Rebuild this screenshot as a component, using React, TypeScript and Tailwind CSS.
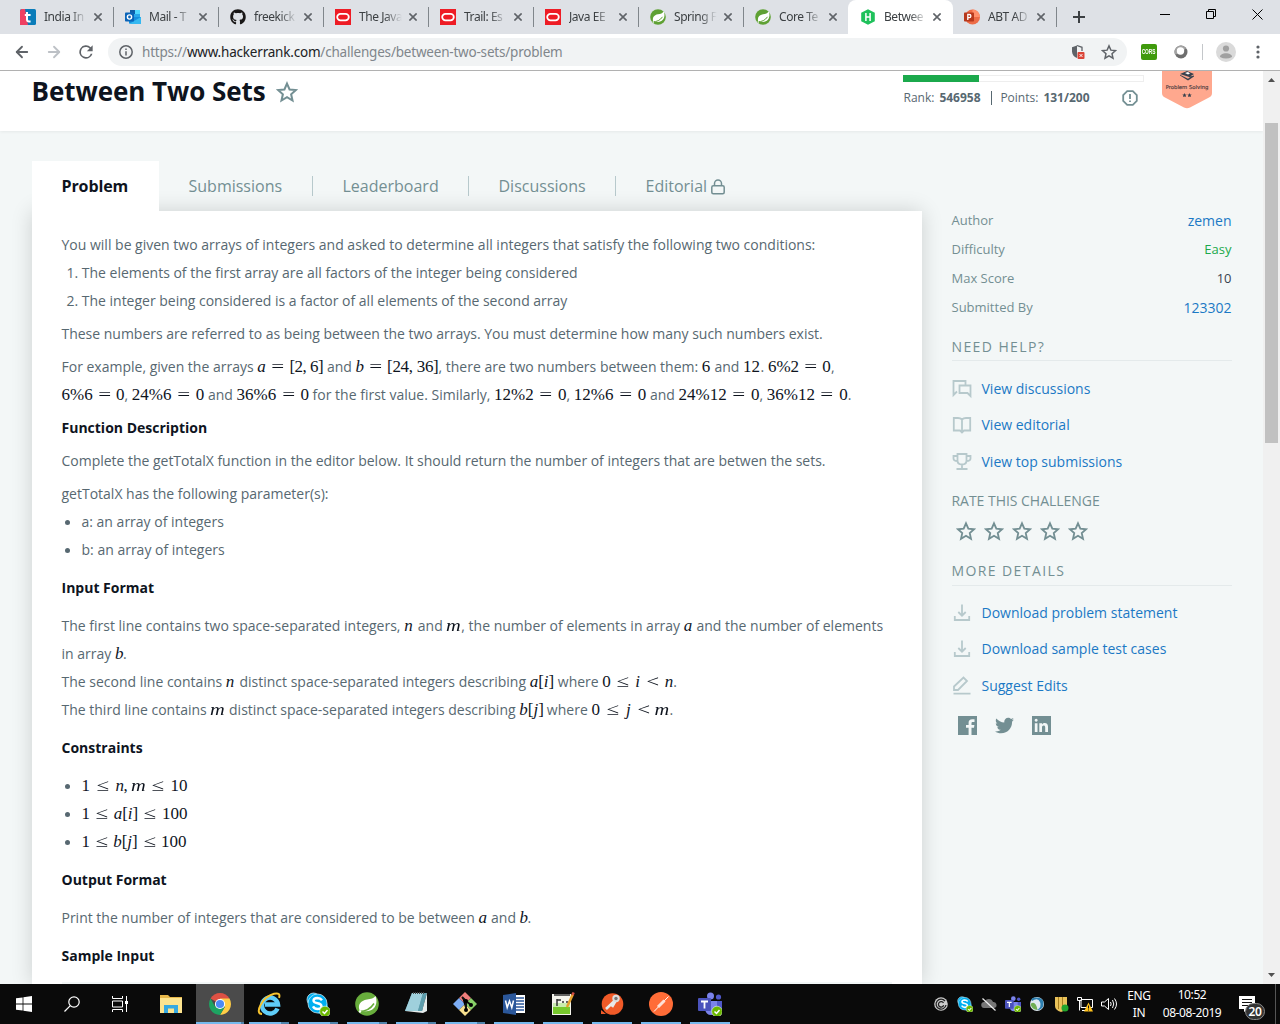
import type { ReactNode } from 'react';
import { FaTwitter, FaGithub } from 'react-icons/fa';
import { ArrowLeft, ArrowRight } from 'lucide-react';

const STAR = 'M12 2.8l2.8 6.4 6.9.7-5.2 4.6 1.5 6.8-6-3.6-6 3.6 1.5-6.8-5.2-4.6 6.9-.7z';

function Star({ className }: { className: string }) {
  return (
    <svg viewBox="0 0 24 24" className={className} fill="none" stroke="currentColor" strokeWidth="2.2">
      <path d={STAR} />
    </svg>
  );
}

/* ---------- browser chrome ---------- */

function Oracle() {
  return (
    <svg viewBox="0 0 16 16" className="size-4 shrink-0">
      <path fill="#ee1c25" d="M0 0h16v16H0z" />
      <rect x="2.2" y="4.8" width="11.6" height="6.6" rx="3.3" fill="none" stroke="#fff" strokeWidth="1.8" />
    </svg>
  );
}

function Spring() {
  return (
    <svg viewBox="0 0 16 16" className="size-4 shrink-0">
      <circle cx="8" cy="8" r="7.8" fill="#5fa134" />
      <path fill="#fff" d="M13.800 2.200c1.400 3.800.7 8-2.500 9.800-2.300 1.300-5.200.9-8 .6C2 9 3.800 6 8 5.300c2.600-.4 4.600-1 5.800-3.100z" />
      <path d="M2.500 12.800q6.500.2 10-5" fill="none" stroke="#5fa134" strokeWidth="1" />
      <circle cx="3.300" cy="13" r=".8" fill="#fff" />
    </svg>
  );
}

function TIcon() {
  return (
    <svg viewBox="0 0 16 16" className="size-4 shrink-0">
      <rect width="16" height="16" rx="1.5" fill="#0a7cb9" />
      <path fill="#ef4163" d="M1.5 0H5l3 16H0V1.5z" />
      <path d="M7 3v7.5q0 2 2 2h1.6M4.8 6h5.8" fill="none" stroke="#fff" strokeWidth="2" />
    </svg>
  );
}

function Outlook() {
  return (
    <svg viewBox="0 0 16 16" className="size-4 shrink-0">
      <path fill="#28a8ea" d="M5 1h10v8H5z" />
      <path fill="#50d9ff" d="M10 1h5v4h-5z" />
      <path fill="#0f5ea8" d="M5 1h5v4H5z" />
      <path fill="#1490df" d="M4 8l12 0v6.5H4z" />
      <path fill="#35b8f1" d="M4 15l12-7v7z" />
      <rect y="3.5" width="9" height="9" rx=".8" fill="#0a64b8" />
      <circle cx="4.500" cy="8" r="2.100" fill="none" stroke="#fff" strokeWidth="1.400" />
    </svg>
  );
}

function Hacker() {
  return (
    <svg viewBox="0 0 16 16" className="size-4 shrink-0">
      <path fill="#1fc15b" d="M8 .2l6.800 3.600v8.400L8 15.800 1.200 12.200V3.800z" />
      <path d="M5.900 4v8M10.100 4v8M5.900 8h4.200" stroke="#fff" strokeWidth="1.500" />
    </svg>
  );
}

function PowerPoint() {
  return (
    <svg viewBox="0 0 16 16" className="size-4 shrink-0">
      <circle cx="8.500" cy="8" r="7.500" fill="#ed6c47" />
      <path fill="#ff8f6b" d="M8.500.5A7.500 7.500 0 0 1 16 8H8.500z" />
      <rect y="3.500" width="10" height="9" rx=".8" fill="#b7381c" />
      <path d="M3.800 11V5.500h1.500a1.600 1.600 0 0 1 0 3.200H3.800" fill="none" stroke="#fff" strokeWidth="1.300" />
    </svg>
  );
}

function Close() {
  return (
    <svg viewBox="0 0 8 8" className="size-2 shrink-0" stroke="#5f6368" strokeWidth="1.600">
      <path d="M.4.4l7.200 7.200M7.600.4L.4 7.600" />
    </svg>
  );
}

function Tab({ icon, title, active, last }: { icon: ReactNode; title: string; active?: boolean; last?: boolean }) {
  return (
    <div
      className={
        active
          ? 'flex h-[34px] w-[105px] items-center rounded-t-lg bg-white pl-3 pr-3'
          : last
            ? 'flex h-[34px] w-[103px] items-center pl-[11px] pr-[11px]'
            : 'flex h-[34px] w-[105px] items-center pl-3 pr-[11px]'
      }
    >
      {icon}
      <span className="ml-2 h-[18px] w-[43px] whitespace-nowrap font-['Noto_Sans'] text-[12px] leading-[18px] tracking-[-0.45px] text-[#3c4043] [mask-image:linear-gradient(to_right,#000_60%,transparent)]">
        {title}
      </span>
      <span className="ml-auto flex">
        <Close />
      </span>
    </div>
  );
}

function Sep() {
  return <div className="-mr-px h-5 w-px shrink-0 self-center bg-[#80868b]" />;
}

function TabStrip() {
  return (
    <div className="flex h-[34px] bg-[#dee1e6] pl-2">
      <Tab icon={<TIcon />} title="India In" />
      <Sep />
      <Tab icon={<Outlook />} title="Mail - T" />
      <Sep />
      <Tab icon={<FaGithub className="size-4 shrink-0 text-[#191717]" />} title="freekick" />
      <Sep />
      <Tab icon={<Oracle />} title="The Java" />
      <Sep />
      <Tab icon={<Oracle />} title="Trail: Es" />
      <Sep />
      <Tab icon={<Oracle />} title="Java EE" />
      <Sep />
      <Tab icon={<Spring />} title="Spring F" />
      <Sep />
      <Tab icon={<Spring />} title="Core Te" />
      <Tab icon={<Hacker />} title="Betwee" active />
      <Tab icon={<PowerPoint />} title="ABT AD" last />
      <Sep />
      <svg viewBox="0 0 12 12" className="ml-[17px] mt-[11px] size-3" stroke="#3c4043" strokeWidth="2">
        <path d="M6 0v12M0 6h12" />
      </svg>
      <svg viewBox="0 0 110 12" className="ml-auto mr-[17px] mt-[8px] h-3 w-[110px]" fill="none" stroke="#000" strokeWidth="1">
        <path d="M7 6.500h10M53.500 3.500h7v7h-7zM55.500 3.500v-2h7v7h-2M99.500 1.500l10 10M109.500 1.500l-10 10" />
      </svg>
    </div>
  );
}

function Toolbar() {
  return (
    <div className="flex h-[37px] items-center border-b border-[#b1b1b1] bg-white pl-[13px]">
      <ArrowLeft className="size-[18px] text-[#5f6368]" strokeWidth={2.4} />
      <ArrowRight className="ml-[14px] size-[18px] text-[#bdc1c6]" strokeWidth={2.4} />
      <svg viewBox="0 0 24 24" className="ml-[13px] size-5" fill="#5f6368">
        <path d="M17.650 6.350A8 8 0 1 0 19.730 14h-2.080A6 6 0 1 1 12 6c1.660 0 3.140.69 4.220 1.780L13 11h7V4z" />
      </svg>
      <div className="ml-[12px] flex h-7 w-[1019px] items-center rounded-full bg-[#f1f3f4] pl-[11px] pr-[10px]">
        <svg viewBox="0 0 14 14" className="size-[14px]" fill="none" stroke="#5f6368" strokeWidth="1.500">
          <circle cx="7" cy="7" r="6.200" />
          <path d="M7 6.200v4.200M7 3.500v1.500" />
        </svg>
        <span className="ml-[9px] whitespace-nowrap font-['Noto_Sans'] text-[13.500px] tracking-[-0.200px] text-[#80868b]">
          https://<span className="text-[#202124]">www.hackerrank.com</span>/challenges/between-two-sets/problem
        </span>
        <svg viewBox="0 0 14 16" className="ml-auto h-4 w-[14px]">
          <path d="M6 1.500L1 3.300v4C1 10.500 3 13 6 14z" fill="#5f6368" />
          <path d="M6 1.500l5 1.800V7" fill="none" stroke="#5f6368" strokeWidth="1.300" />
          <rect x="6.500" y="8" width="7" height="7" rx="1" fill="#db4437" />
          <path d="M8.600 10.100l2.800 2.800M11.400 10.100l-2.800 2.800" stroke="#fff" />
        </svg>
        <Star className="ml-[16px] size-4 text-[#5f6368]" />
      </div>
      <span className="ml-[14px] flex size-4 items-center justify-center rounded-[2px] bg-[#3f9a0c] font-['Liberation_Sans'] text-[8px] font-bold text-white">
        <span className="shrink-0 scale-x-[0.6]">CORS</span>
      </span>
      <svg viewBox="0 0 16 16" className="ml-4 size-4">
        <circle cx="8" cy="8" r="6.500" fill="#6e6e6e" />
        <path d="M8 1.500a6.500 6.500 0 0 0-6 9Q8 10 13 4.200A6.500 6.500 0 0 0 8 1.500z" fill="#a3a3a3" />
        <circle cx="7.500" cy="7" r="3.700" fill="#fff" />
      </svg>
      <div className="ml-[13px] h-4 w-px bg-[#c4c7ca]" />
      <svg viewBox="0 0 20 20" className="ml-[13px] size-5">
        <circle cx="10" cy="10" r="10" fill="#dadada" />
        <circle cx="10" cy="6.500" r="3.100" fill="#a0a0a0" />
        <path d="M4 15c0-5 12-5 12 0q-6 3-12 0z" fill="#a0a0a0" />
      </svg>
      <svg viewBox="0 0 4 14" className="ml-[20px] h-[14px] w-1" fill="#5f6368">
        <circle cx="2" cy="2" r="1.600" />
        <circle cx="2" cy="7" r="1.600" />
        <circle cx="2" cy="12" r="1.600" />
      </svg>
    </div>
  );
}

/* ---------- page ---------- */

function PageHeader() {
  return (
    <div className="flex h-[60px] shrink-0 bg-white pl-[31.5px] shadow-[0_1px_3px_rgba(0,0,0,0.06)]">
      <h1 className="mt-[2px] w-[234px] whitespace-nowrap text-[26px] font-bold leading-9 tracking-[-0.05px] text-[#0e141e]">Between Two Sets</h1>
      <Star className="ml-[10.5px] mt-[10px] size-[22px] text-[#738f93]" />
      <div className="ml-auto mr-[18px] w-[241px]">
        <div className="mt-1 h-[7px] border border-[#eeeeee] bg-white">
          <div className="-ml-px -mt-px h-[7px] w-[76px] bg-[#1ba94c]" />
        </div>
        <div className="mt-1 flex h-6 items-center pl-[0.5px] text-[12px] text-[#576871]">
          Rank:<b className="ml-[5px] w-[42px] font-bold">546958</b>
          <span className="ml-[9.5px] mr-[8.5px] h-[14px] w-px bg-[#576871]" />
          Points:<b className="ml-[5px] font-bold">131/200</b>
          <svg viewBox="0 0 16 16" className="ml-auto mr-[6px] size-4" fill="none" stroke="#738f93" strokeWidth="1.800">
            <path d="M5.200 1.200h5.600l4 4v5.600l-4 4H5.200l-4-4V5.200zM8 4v5M8 10.500V12" />
          </svg>
        </div>
      </div>
      <div className="mr-[51px] h-[38px] w-[50px]">
        <svg viewBox="0 0 50 38" className="h-[38px] w-[50px]">
          <path fill="#ffa88e" d="M0 0h50v22q0 3-3 4.500L28 36.500q-3 1.500-6 0L3 26.500q-3-1.500-3-4.500z" />
          <path fill="#39424e" d="M18 3l7-3 7 3-4 2.500 4-1v1l-6 4-8-5v-.800l8 4 2-1.500z" />
          <path fill="#fff" d="M23 2l3-1 2 1.500-2 1z" />
          <text x="25" y="18.200" textAnchor="middle" className="font-['DejaVu_Sans'] text-[5.300px]" fill="#4a3c40" stroke="#4a3c40" strokeWidth=".15">Problem Solving</text>
          <path fill="#39424e" d="M22.500 22l.7 1.400 1.500.2-1.100 1 .3 1.500-1.400-.7-1.400.7.300-1.500-1.100-1 1.500-.2zM27.500 22l.7 1.400 1.500.2-1.100 1 .3 1.500-1.400-.7-1.400.7.300-1.500-1.100-1 1.500-.2z" />
        </svg>
      </div>
    </div>
  );
}

function PageTabs() {
  return (
    <div className="flex h-[50px] items-center text-[16px] text-[#738f93]">
      <div className="flex h-full w-[127px] items-center bg-white pl-[29.5px] font-bold tracking-[-0.1px] text-[#0e141e]">Problem</div>
      <div className="w-[153px] pl-[29.5px]">Submissions</div>
      <div className="h-5 w-px bg-[#b7c9cc]" />
      <div className="w-[155px] pl-[29.5px]">Leaderboard</div>
      <div className="h-5 w-px bg-[#b7c9cc]" />
      <div className="w-[146px] pl-[29.5px]">Discussions</div>
      <div className="h-5 w-px bg-[#b7c9cc]" />
      <div className="flex items-center pl-[29.5px]">
        Editorial
        <svg viewBox="0 0 14 16" className="ml-[4px] mt-[2px] h-4 w-[14px]" fill="none" stroke="#738f93" strokeWidth="1.500">
          <rect x=".8" y="6.800" width="12.400" height="8" rx="1.500" />
          <path d="M3.500 6.800V4.500a3.500 3.500 0 0 1 7 0v2.300" />
        </svg>
      </div>
    </div>
  );
}

function M({ w, children }: { w: string; children: ReactNode }) {
  return (
    <span className={`inline-flex justify-between whitespace-pre font-['Liberation_Serif'] text-[17px] leading-[20px] text-[#0e141e] ${w}`}>
      {children}
    </span>
  );
}

/* relation sign, drawn wider than the serif face has it */
function Op({ children }: { children: ReactNode }) {
  return <span className="inline-block scale-x-[1.35]">{children}</span>;
}

function Line({ children }: { children: ReactNode }) {
  return <p className="h-7 whitespace-nowrap leading-7">{children}</p>;
}

function Title({ children }: { children: ReactNode }) {
  return <h2 className="h-7 font-bold leading-7 text-[#0e141e]">{children}</h2>;
}

function Bullet({ children }: { children: ReactNode }) {
  return (
    <li className="flex h-7 items-center leading-7">
      <span className="ml-[3px] mr-[12px] size-[5px] rounded-full bg-[#576871]" />
      <span>{children}</span>
    </li>
  );
}

function Problem() {
  return (
    <div className="h-[773px] bg-white pl-[29.5px] pr-[30px] pt-5 text-[14px] text-[#576871]">
      <Line>You will be given two arrays of integers and asked to determine all integers that satisfy the following two conditions:</Line>
      <ol className="tracking-[-0.01px]">
        <li className="h-7 pl-[5px] leading-7">1. The elements of the first array are all factors of the integer being considered</li>
        <li className="h-7 pl-[5px] leading-7">2. The integer being considered is a factor of all elements of the second array</li>
      </ol>
      <div className="mt-[5px] tracking-[-0.015px]">
        <Line>These numbers are referred to as being between the two arrays. You must determine how many such numbers exist.</Line>
      </div>
      <div className="mt-[5px]">
        <Line>
          For example, given the arrays <M w="w-[66px]"><i>a</i><Op>=</Op><span className="tracking-[-0.5px]">[2, 6]</span></M> and <M w="w-[83px]"><i>b</i><Op>=</Op><span className="tracking-[-0.3px]">[24, 36]</span></M>, there are two numbers between them: <M w="w-[9px]">6</M> and <M w="w-[17.5px]">12</M>. <M w="w-[63px]"><span>6%2</span><Op>=</Op><span>0</span></M>,
        </Line>
        <Line>
          <M w="w-[63px]"><span>6%6</span><Op>=</Op><span>0</span></M>, <M w="w-[72.5px]"><span>24%6</span><Op>=</Op><span>0</span></M> and <M w="w-[72.5px]"><span>36%6</span><Op>=</Op><span>0</span></M> for the first value. Similarly, <M w="w-[72.5px]"><span>12%2</span><Op>=</Op><span>0</span></M>, <M w="w-[72.5px]"><span>12%6</span><Op>=</Op><span>0</span></M> and <M w="w-[81px]"><span>24%12</span><Op>=</Op><span>0</span></M>, <M w="w-[81px]"><span>36%12</span><Op>=</Op><span>0</span></M>.
        </Line>
      </div>
      <div className="mt-[5px]">
        <Title>Function Description</Title>
      </div>
      <div className="mt-[5px] tracking-[-0.02px]">
        <Line>Complete the getTotalX function in the editor below. It should return the number of integers that are betwen the sets.</Line>
      </div>
      <div className="mt-[5px]">
        <Line>getTotalX has the following parameter(s):</Line>
        <ul>
          <Bullet>a: an array of integers</Bullet>
          <Bullet>b: an array of integers</Bullet>
        </ul>
      </div>
      <div className="mt-[10px] space-y-[10px]">
        <Title>Input Format</Title>
        <div>
          <Line>The first line contains two space-separated integers, <M w="w-[10px]"><i>n</i></M> and <M w="w-[15px]"><i className="origin-left scale-x-[1.2]">m</i></M>, the number of elements in array <M w="w-[9px]"><i>a</i></M> and the number of elements</Line>
          <Line>in array <M w="w-[8px]"><i>b</i></M>.</Line>
          <Line>The second line contains <M w="w-[10px]"><i>n</i></M> distinct space-separated integers describing <M w="w-[24.5px]"><i>a</i><span>[</span><i>i</i><span>]</span></M> where <M w="w-[71px]"><span>0</span><Op>≤</Op><i>i</i><Op>&lt;</Op><i>n</i></M>.</Line>
          <Line>The third line contains <M w="w-[15px]"><i className="origin-left scale-x-[1.2]">m</i></M> distinct space-separated integers describing <M w="w-[24px]"><i>b</i><span>[</span><i>j</i><span>]</span></M> where <M w="w-[78px]"><span>0</span><Op>≤</Op><i>j</i><Op>&lt;</Op><i className="origin-right scale-x-[1.2]">m</i></M>.</Line>
        </div>
        <Title>Constraints</Title>
        <ul>
          <Bullet><M w="w-[106px]"><span>1</span><Op>≤</Op><span className="tracking-[-0.5px]"><i>n</i>, <i className="inline-block origin-left scale-x-[1.2] pr-[2px]">m</i></span><Op>≤</Op><span>10</span></M></Bullet>
          <Bullet><M w="w-[106px]"><span>1</span><Op>≤</Op><span><i>a</i>[<i>i</i>]</span><Op>≤</Op><span>100</span></M></Bullet>
          <Bullet><M w="w-[105px]"><span>1</span><Op>≤</Op><span><i>b</i>[<i>j</i>]</span><Op>≤</Op><span>100</span></M></Bullet>
        </ul>
        <Title>Output Format</Title>
        <div className="tracking-[-0.01px]">
          <Line>Print the number of integers that are considered to be between <M w="w-[9px]"><i>a</i></M> and <M w="w-[8px]"><i>b</i></M>.</Line>
        </div>
        <Title>Sample Input</Title>
      </div>
      <div className="mt-3 h-[2px] bg-[#f3f7f7]" />
    </div>
  );
}

function Row({ label, value, color }: { label: string; value: string; color: string }) {
  return (
    <div className="flex h-[29px] items-center justify-between text-[13px]">
      <span className="text-[#738f93]">{label}</span>
      <span className={color}>{value}</span>
    </div>
  );
}

function Action({ d, text, h }: { d: string; text: string; h: string }) {
  return (
    <div className={`flex items-center text-[14px] text-[#1b79c5] ${h}`}>
      <svg viewBox="0 0 20 20" className="mt-px size-5 text-[#b7c9cc]" fill="none" stroke="currentColor" strokeWidth="1.800">
        <path d={d} />
      </svg>
      <span className="ml-[10px]">{text}</span>
    </div>
  );
}

const DOWNLOAD = 'M10 1.500v11M6.300 9l3.700 3.700L13.700 9M2.800 13v4h14.400v-4';

function Sidebar() {
  return (
    <aside className="ml-[29.5px] mt-[45px] w-[280px]">
      <Row label="Author" value="zemen" color="text-[14px] text-[#1b79c5]" />
      <Row label="Difficulty" value="Easy" color="text-[#1ba94c]" />
      <Row label="Max Score" value="10" color="text-[#39424e]" />
      <Row label="Submitted By" value="123302" color="text-[14px] text-[#1b79c5]" />
      <div className="mt-[15px] h-[24px] border-b border-[#e4eaeb] text-[14px] leading-[20px] tracking-[1.400px] text-[#738f93]">NEED HELP?</div>
      <div className="mt-[9px]">
        <Action h="h-9" text="View discussions" d="M5 12.500L1.500 16V2h12v4M7.500 6.500h11V17L15.500 14h-8z" />
        <Action h="h-9" text="View editorial" d="M10 4.500Q8.500 3 6 3H1.800v12.500H8l2 2 2-2h6.200V3H14q-2.500 0-4 1.500zV16" />
        <Action h="h-[38px]" text="View top submissions" d="M5.500 2h9v6.500q0 4-4.500 4t-4.500-4zM5.500 4h-4v2.500Q1.500 9 5.500 9M14.500 4h4v2.500Q18.500 9 14.500 9M10 12.500V17M4.500 17h11" />
      </div>
      <div className="mt-[11px] text-[14px] leading-5 tracking-[-0.030px] text-[#738f93]">RATE THIS CHALLENGE</div>
      <div className="mt-[10px] flex h-[21px] gap-[8px] pl-[4px] text-[#738f93]">
        {[1, 2, 3, 4, 5].map((n) => (
          <Star key={n} className="size-5" />
        ))}
      </div>
      <div className="mt-[19px] h-[25px] border-b border-[#e4eaeb] text-[14px] leading-[20px] tracking-[1.400px] text-[#738f93]">MORE DETAILS</div>
      <div className="mt-[8px]">
        <Action h="h-9" text="Download problem statement" d={DOWNLOAD} />
        <Action h="h-9" text="Download sample test cases" d={DOWNLOAD} />
        <Action h="h-[39px]" text="Suggest Edits" d="M2 14v-3.500L11.500 1.500l3.500 3.500L6 14zM1.500 17.700h17" />
      </div>
      <div className="mt-[11px] flex items-center gap-[18px] pl-[6px] text-[#738f93]">
        <svg viewBox="0 0 19 19" className="size-[19px]" fill="currentColor">
          <path d="M0 0h19v19h-5.500v-7.200H16l.4-2.900h-2.900V7.200c0-.9.300-1.300 1.400-1.300h1.600V3.200h-2.300c-2.400 0-3.600 1.300-3.600 3.600v2.100H8v2.900h2.600V19H0z" />
        </svg>
        <FaTwitter className="size-[19px]" />
        <svg viewBox="0 0 19 19" className="size-[19px]" fill="currentColor">
          <path fillRule="evenodd" d="M0 0h19v19H0zM2.800 7.200v8.800h2.700V7.200zM4.150 2.800a1.500 1.500 0 1 0 .01 0zM7.300 7.200v8.800H10v-4.500c0-2.600 3.200-2.700 3.200 0V16H16v-5.400c0-4-4.200-4.400-6-2.200V7.200z" />
        </svg>
      </div>
    </aside>
  );
}

function Scrollbar() {
  return (
    <div className="flex w-[17px] shrink-0 flex-col items-center bg-[#f0f0f0]">
      <svg viewBox="0 0 7 4" className="mt-[7px] h-1 w-[7px]" fill="#505050"><path d="M3.500 0L7 4H0z" /></svg>
      <div className="mt-[41px] h-[320px] w-[13px] bg-[#c1c1c1]" />
      <svg viewBox="0 0 7 4" className="mb-[7px] mt-auto h-1 w-[7px]" fill="#505050"><path d="M3.500 4L7 0H0z" /></svg>
    </div>
  );
}

/* ---------- taskbar ---------- */

function TaskButton({ children, active, stacked, open = true }: { children: ReactNode; active?: boolean; stacked?: boolean; open?: boolean }) {
  return (
    <div className={active ? 'ml-px flex h-10 w-12 flex-col items-center bg-[#4b4b4b]' : 'ml-px flex h-10 w-12 flex-col items-center'}>
      <svg viewBox="0 0 24 24" className="mt-2 size-6">{children}</svg>
      {open && (
        <div className={active ? 'mt-auto flex h-[2px] w-12 justify-end bg-[#76b9ed]' : 'mt-auto flex h-[2px] w-10 justify-end bg-[#76b9ed]'}>
          {stacked && <div className={active ? 'w-[3px] bg-[#4f83ab]' : 'w-2 bg-[#4f83ab]'} />}
        </div>
      )}
    </div>
  );
}

const CHECK = (
  <g>
    <circle cx="19" cy="19.500" r="5.300" fill="#6bb700" stroke="#e8f4d8" strokeWidth=".6" />
    <path d="M16.500 19.500l2 2 3-3.500" fill="none" stroke="#fff" strokeWidth="1.500" />
  </g>
);

const TEAMS = (
  <g>
    <circle cx="12.500" cy="4" r="3.500" fill="#7b83eb" />
    <circle cx="20.500" cy="5" r="2.600" fill="#5059c9" />
    <path fill="#5059c9" d="M15 9h9v7q-1 5-5 5z" />
    <path fill="#7b83eb" d="M7 9h12v8q-1 6-6 6t-6-6z" />
    <rect y="6" width="13" height="13" rx="1" fill="#4b53bc" />
    <path d="M3 9.500h7M6.500 9.500v7" stroke="#fff" strokeWidth="1.800" />
    {CHECK}
  </g>
);

const SKYPE = (
  <g>
    <circle cx="7.500" cy="7.500" r="6.500" fill="#00aff0" stroke="#d9f3fd" strokeWidth=".7" />
    <circle cx="15" cy="15" r="7" fill="#00aff0" />
    <circle cx="11.500" cy="11.500" r="9.500" fill="#00aff0" stroke="#d9f3fd" strokeWidth=".7" />
    <path d="M16 8.200Q14.500 6 11.500 6 7.500 6.200 7.500 8.600q0 2 4 2.700t4 3q0 2.700-4 2.700-3 0-4.500-2.600" fill="none" stroke="#fff" strokeWidth="2.400" />
    {CHECK}
  </g>
);

function Tray({ children }: { children: ReactNode }) {
  return <svg viewBox="0 0 16 16" className="size-4 shrink-0">{children}</svg>;
}

function Taskbar() {
  return (
    <div className="flex h-10 bg-[#0a0a0a] text-white">
      <div className="flex w-12 items-center justify-center">
        <svg viewBox="0 0 16 16" className="size-4" fill="#fff"><path d="M0 2.300L6.600 1.400v6.200H0zM7.400 1.300L16 0v7.600H7.400zM0 8.400h6.600v6.200L0 13.700zM7.400 8.400H16V16l-8.600-1.200z" /></svg>
      </div>
      <div className="flex w-12 items-center justify-center">
        <svg viewBox="0 0 16 16" className="size-4" fill="none" stroke="#fff" strokeWidth="1.200"><circle cx="10" cy="6" r="5.200" /><path d="M6.300 9.700L.5 15.500" /></svg>
      </div>
      <div className="flex w-12 items-center justify-center">
        <svg viewBox="0 0 16 16" className="size-4" fill="none" stroke="#fff"><path d="M.5 0v2.500h10V0M.5 5h10v6H.500zM.5 16v-2.500h10V16M14.500 0v16" /><path d="M13 5h3v3h-3z" fill="#fff" stroke="none" /></svg>
      </div>
      <div className="ml-[2px] flex">
        <TaskButton open={false}>
          <path fill="#e8b84a" d="M1 3h8l2 2h12v16H1z" />
          <path fill="#fde48f" d="M1 6h22v15H1z" />
          <path fill="#36a9e1" d="M5 13h14v8h-4v-4.500H9V21H5z" />
        </TaskButton>
        <TaskButton active stacked>
          <path fill="#dd5144" d="M12 12L2.500 6.500a11 11 0 0 1 19 0z" />
          <path fill="#ffcd46" d="M12 12V6.500h9.500A11 11 0 0 1 12 23l4.800-8z" />
          <path fill="#1da462" d="M12 12l4.800 2.700L12 23A11 11 0 0 1 2.500 6.500l4.700 8.200z" />
          <circle cx="12" cy="12" r="5.100" fill="#fff" />
          <circle cx="12" cy="12" r="4.100" fill="#4c8bf5" />
        </TaskButton>
        <TaskButton stacked>
          <path d="M20.500 16.500A8 8 0 1 1 21 12.500H8" fill="none" stroke="#5fcdf8" strokeWidth="4.400" />
          <path d="M5 22C-3 22 5 5 17 1.800q7-1.500 5 4" fill="none" stroke="#f7c32e" strokeWidth="2" />
        </TaskButton>
        <TaskButton stacked>{SKYPE}</TaskButton>
        <TaskButton stacked>
          <circle cx="12" cy="12" r="11.800" fill="#68ad3c" />
          <path fill="#fff" d="M20.500 4c2 5.400 1 11-3.500 13.700-3.500 2-8 1.500-12 1.500C2 13 5.500 8.500 12 7.500c4-.6 6.700-1 8.500-3.500z" />
          <path d="M4 19.500q10 0 15-8" fill="none" stroke="#68ad3c" strokeWidth="1.500" />
          <circle cx="5" cy="19.500" r="1.200" fill="#fff" />
        </TaskButton>
        <TaskButton stacked>
          <path fill="#5d9dac" d="M8 1h15l-5 18H1z" />
          <path fill="#9fd0dc" d="M8 1h11l-5 18H1z" />
          <path fill="#e5ecec" d="M1 19h17l5-18v18l-4 2z" />
          <path fill="#5d9dac" d="M14 19l5-18h3l-4 18z" />
          <path d="M9 1h12" stroke="#444" strokeDasharray="1 1" strokeWidth="2" />
        </TaskButton>
        <TaskButton stacked>
          <path fill="#f07d7b" d="M12 0l6 6-6 6-6-6z" />
          <path fill="#7cadf5" d="M6 6l6 6-6 6-6-6z" />
          <path fill="#87d068" d="M18 6l6 6-6 6-6-6z" />
          <path fill="#f8e08e" d="M12 12l6 6-6 6-6-6z" />
          <path d="M9 5l4 4v10M13 9l5 4" stroke="#111" strokeWidth="2" />
          <circle cx="13" cy="9" r="2" /><circle cx="13" cy="18" r="2" /><circle cx="18" cy="13" r="2" />
        </TaskButton>
        <TaskButton>
          <path fill="#fff" d="M12 3h11v18H12z" />
          <path d="M14 6h8M14 9h8M14 12h8M14 15h8M14 18h8" stroke="#2b579a" strokeWidth="1.300" />
          <path fill="#2b579a" d="M1 3l13-2v22L1 21z" />
          <path d="M3.500 8.500l1.700 7 2.300-6.500 2.300 6.500 1.700-7" fill="none" stroke="#fff" strokeWidth="1.500" />
        </TaskButton>
        <TaskButton>
          <path fill="#f5f5ed" d="M1 2h19v21H1z" />
          <path fill="#c9ecae" d="M2 11h17v4H2z" />
          <path fill="#77c92d" d="M2 15h17v7H2z" />
          <path d="M6 7v7M6 8h4M11 10h2M15 10h2M3 3h16" stroke="#333" strokeWidth="1.500" />
          <path d="M22 2l-6 13" stroke="#e6a02c" strokeWidth="2.500" /><path d="M22.700.5l-1.200 2.500" stroke="#d24d43" strokeWidth="2.500" />
        </TaskButton>
        <TaskButton>
          <circle cx="12.500" cy="12" r="10.800" fill="#f05a28" />
          <path d="M14.500 9L6 17M15.500 9l-3.500 6" stroke="#e8e8e8" strokeWidth="2.600" />
          <circle cx="16" cy="6.500" r="3.700" fill="#ddd" /><circle cx="16" cy="6.500" r="1.700" fill="#777" />
          <path fill="#f05a28" d="M1 18l5 4H1z" />
        </TaskButton>
        <TaskButton>
          <circle cx="12" cy="12" r="12" fill="#ff6c37" />
          <path d="M19.500 4.500L5 19.500" stroke="#fff" strokeWidth="1" /><path d="M15.500 8.500l-6.500 6.500" stroke="#fde0d5" strokeWidth="3" />
        </TaskButton>
        <TaskButton>{TEAMS}</TaskButton>
      </div>
      <div className="ml-auto flex items-center gap-2">
        <Tray><circle cx="8" cy="8" r="6.800" fill="#ccc" /><path d="M12 5A5 5 0 1 0 13 9M10.500 7a2.700 2.700 0 1 0 .2 2.300" fill="none" stroke="#222" strokeWidth="1.300" /></Tray>
        <Tray><g transform="scale(.667)">{SKYPE}</g></Tray>
        <Tray><path d="M3 12a3 3 0 0 1 .5-6A4.500 4.500 0 0 1 12 6a3 3 0 0 1 1 6z" fill="#777" /><path d="M1.500 2.500l13 12" stroke="#eee" strokeWidth="1.200" /></Tray>
        <Tray><g transform="scale(.667)">{TEAMS}</g></Tray>
        <Tray><circle cx="8" cy="8" r="7" fill="#dfeaf0" /><path d="M3 5q6-4 8 1t-3 8q6 0 6.500-6T8 1.500 3 5z" fill="#2d7fb0" /><path d="M1.500 8q5-4 7 6-6-.5-7-6z" fill="#6fae52" /></Tray>
        <Tray><path fill="#e9c25a" d="M2 1h12v9q0 4-6 6-6-2-6-6z" /><path d="M5.500 1v12M9.500 1v12" stroke="#a87f20" /><circle cx="12" cy="12" r="3.500" fill="#22a52d" /></Tray>
        <Tray><path d="M4 3.500h11.500v8H4zM5 14.500h7M.5 1.500h4v3h-4zM2.500 5v9.500" fill="none" stroke="#fff" /><path fill="#ffc21c" d="M11.500 6.500L16 15.500H7z" /><path d="M11.500 9.500v3M11.500 13.500v1" stroke="#111" /></Tray>
        <Tray><path d="M.5 6v4h3l4 3.500v-11L3.500 6zM9.500 6q1.300 2 0 4M11.500 4q2.500 4 0 8M13.500 2.500q4 5.500 0 11" fill="none" stroke="#fff" /></Tray>
      </div>
      <div className="ml-[9px] w-[26px] pt-[3px] text-center font-['Noto_Sans'] text-[12px] leading-[17px] tracking-[-0.4px]"><div>ENG</div><div>IN</div></div>
      <div className="ml-[9px] w-[62px] whitespace-nowrap pt-[2px] text-center font-['Noto_Sans'] text-[12px] leading-[18px] tracking-[-0.4px]"><div>10:52</div><div>08-08-2019</div></div>
      <div className="relative ml-[16px] mt-3 h-6 w-[26px]">
        <svg viewBox="0 0 16 16" className="size-4"><path fill="#fff" d="M0 0h16v13H9l-4 3v-3H0z" /><path d="M3 3.500h10M3 6.500h10M3 9.500h10" stroke="#111" /></svg>
        <span className="absolute left-[6px] top-[7px] flex h-[17px] w-5 items-center justify-center rounded-full border border-[#888] bg-[#333] font-['Noto_Sans'] text-[12px] font-semibold tracking-[-0.3px]">20</span>
      </div>
      <div className="ml-[10px] h-10 w-px bg-[#555]" />
      <div className="w-1" />
    </div>
  );
}

export default function App() {
  return (
    <div className="flex h-[1024px] w-[1280px] flex-col overflow-hidden bg-white font-['Open_Sans',sans-serif]">
      <TabStrip />
      <Toolbar />
      <div className="flex h-[913px]">
        <main className="flex w-[1263px] flex-col overflow-hidden bg-[#f3f7f7]">
          <PageHeader />
          <div className="flex pl-8 pt-[30px]">
            <section className="w-[890px]">
              <PageTabs />
              <div className="shadow-[0_0_20px_rgba(0,0,0,0.16)] [clip-path:polygon(-40px_-40px,0_-40px,0_0,127px_0,127px_-40px,930px_-40px,930px_800px,-40px_800px)]">
                <Problem />
              </div>
            </section>
            <Sidebar />
          </div>
        </main>
        <Scrollbar />
      </div>
      <Taskbar />
    </div>
  );
}
